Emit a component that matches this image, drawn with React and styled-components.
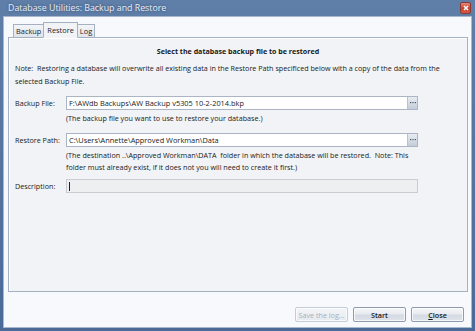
import React from "react";
import styled, { createGlobalStyle } from "styled-components";

const Global = createGlobalStyle`
  html, body { margin: 0; padding: 0; }
  body { width: 475px; height: 331px; overflow: hidden; background: #fff; }
  * { box-sizing: border-box; }
`;

const Window = styled.div`
  width: 475px;
  height: 331px;
  display: flex;
  flex-direction: column;
  background: linear-gradient(#5f7fa9, #4a6b98);
  padding: 0 3px 3px 3px;
  font-family: "Open Sans", "Noto Sans", sans-serif;
  font-size: 7.2px;
  color: #1a1a1a;
`;

const TitleBar = styled.div`
  height: 17px;
  display: flex;
  align-items: center;
  justify-content: space-between;
  padding: 0 1px 0 5px;
`;

const Title = styled.div`
  color: #e9eef6;
  font-size: 8.8px;
  text-shadow: 0 0 3px rgba(20, 40, 70, 0.6);
`;

const CloseX = styled.div`
  width: 11px;
  height: 12px;
  border-radius: 2px;
  background: linear-gradient(#e5877a, #c8402f 55%, #d55a45);
  border: 1px solid #8b3a32;
  display: flex;
  align-items: center;
  justify-content: center;
`;

const Client = styled.div`
  flex: 1;
  background: #f7f9fc;
  border: 1px solid #a9b8cc;
  display: flex;
  flex-direction: column;
  padding: 5px 2px 5px 3px;
`;

const Tabs = styled.div`
  display: flex;
  align-items: flex-end;
  height: 16px;
  padding-left: 6px;
  position: relative;
  z-index: 1;
`;

const Tab = styled.div`
  height: ${(p) => (p.$active ? "16px" : "14px")};
  padding: 0 ${(p) => (p.$active ? "3px" : "2px")};
  display: flex;
  align-items: center;
  border: 1px solid #a4b1c3;
  border-bottom: ${(p) => (p.$active ? "1px solid #f1f3f6" : "1px solid #a4b1c3")};
  margin-right: ${(p) => (p.$active ? "-1px" : "0")};
  margin-left: ${(p) => (p.$active ? "-1px" : "0")};
  background: ${(p) =>
    p.$active ? "#f1f3f6" : "linear-gradient(#f3f5f8, #dfe4eb)"};
  color: #1e1e1e;
  font-size: 7.4px;
  position: relative;
  z-index: ${(p) => (p.$active ? 2 : 1)};
`;

const Panel = styled.div`
  margin-top: -1px;
  margin-left: 1px;
  height: 255px;
  width: 460px;
  background: #f1f3f6;
  border: 1px solid #a4b1c3;
  box-shadow: inset 1px 1px 0 #ffffff;
  padding: 8px 6px 0 6px;
  display: flex;
  flex-direction: column;
`;

const Heading = styled.div`
  text-align: center;
  font-weight: 700;
  font-size: 7.1px;
  line-height: 11px;
  margin-bottom: 5px;
`;

const Note = styled.div`
  line-height: 12.5px;
  margin-bottom: 9px;
  padding-right: 8px;
`;

const Row = styled.div`
  display: grid;
  grid-template-columns: 51px 352px;
  align-items: start;
  margin-bottom: ${(p) => p.$mb || 0}px;
`;

const Label = styled.div`
  line-height: 14px;
`;

const Field = styled.div`
  display: flex;
  flex-direction: column;
`;

const InputBox = styled.div`
  height: 14px;
  border: 1px solid ${(p) => (p.$disabled ? "#c8cdd4" : "#abb5c3")};
  background: ${(p) => (p.$disabled ? "#eeeff1" : "#ffffff")};
  display: flex;
  align-items: center;
  padding-left: 2px;
  justify-content: space-between;
`;

const Value = styled.span`
  white-space: nowrap;
  line-height: 12px;
  font-size: 7.4px;
`;

const Caret = styled.span`
  width: 1px;
  height: 9px;
  background: #222;
`;

const Browse = styled.div`
  width: 10px;
  height: 12px;
  background: linear-gradient(#e9edf2, #c3ccd8);
  border-left: 1px solid #b9c3d0;
  display: flex;
  align-items: center;
  justify-content: center;
`;

const Help = styled.div`
  line-height: 12px;
  padding-top: 2px;
`;

const Footer = styled.div`
  display: flex;
  justify-content: flex-end;
  gap: 5px;
  padding: 15px 5px 0 0;
`;

const Button = styled.div`
  width: 53px;
  height: 15px;
  border: 1px solid ${(p) => (p.$disabled ? "#c4ccd7" : "#8e9bae")};
  border-radius: 2px;
  background: ${(p) =>
    p.$disabled
      ? "linear-gradient(#f3f5f8, #e6eaef)"
      : "linear-gradient(#f6f7f9 0%, #e7eaef 48%, #d4dae3 52%, #dfe3ea 100%)"};
  box-shadow: inset 0 0 0 1px rgba(255, 255, 255, 0.7);
  display: flex;
  align-items: center;
  justify-content: center;
  color: ${(p) => (p.$disabled ? "#a7b0bc" : "#1a1a1a")};
  font-size: 7.2px;
  font-weight: ${(p) => (p.$disabled ? 400 : 600)};
`;

const U = styled.span`
  text-decoration: underline;
`;

const Dots = () => (
  <svg width="6" height="2" viewBox="0 0 6 2">
    <rect x="0" y="0" width="1.2" height="1.2" fill="#4a5565" />
    <rect x="2.4" y="0" width="1.2" height="1.2" fill="#4a5565" />
    <rect x="4.8" y="0" width="1.2" height="1.2" fill="#4a5565" />
  </svg>
);

export default function App() {
  return (
    <>
      <Global />
      <Window>
        <TitleBar>
          <Title>Database Utilities: Backup and Restore</Title>
          <CloseX>
            <svg width="6" height="6" viewBox="0 0 6 6">
              <path d="M1 1L5 5M5 1L1 5" stroke="#fff" strokeWidth="1.5" />
            </svg>
          </CloseX>
        </TitleBar>
        <Client>
          <Tabs>
            <Tab>Backup</Tab>
            <Tab $active>Restore</Tab>
            <Tab>Log</Tab>
          </Tabs>
          <Panel>
            <Heading>Select the database backup file to be restored</Heading>
            <Note>
              Note:&nbsp; Restoring a database will overwrite all existing data in the
              Restore Path specificed below with a copy of the data from the selected
              Backup File.
            </Note>
            <Row $mb={9}>
              <Label>Backup File:</Label>
              <Field>
                <InputBox>
                  <Value>F:\AWdb Backups\AW Backup v5305 10-2-2014.bkp</Value>
                  <Browse>
                    <Dots />
                  </Browse>
                </InputBox>
                <Help>(The backup file you want to use to restore your database.)</Help>
              </Field>
            </Row>
            <Row $mb={6}>
              <Label>Restore Path:</Label>
              <Field>
                <InputBox>
                  <Value>C:\Users\Annette\Approved Workman\Data</Value>
                  <Browse>
                    <Dots />
                  </Browse>
                </InputBox>
                <Help>
                  (The destination ..\Approved Workman\DATA&nbsp; folder in which the
                  database will be restored.&nbsp; Note: This folder must already exist,
                  if it does not you will need to create it first.)
                </Help>
              </Field>
            </Row>
            <Row>
              <Label>Description:</Label>
              <Field>
                <InputBox $disabled>
                  <Caret />
                </InputBox>
              </Field>
            </Row>
          </Panel>
          <Footer>
            <Button $disabled>Save the log...</Button>
            <Button>Start</Button>
            <Button>
              <U>C</U>lose
            </Button>
          </Footer>
        </Client>
      </Window>
    </>
  );
}
